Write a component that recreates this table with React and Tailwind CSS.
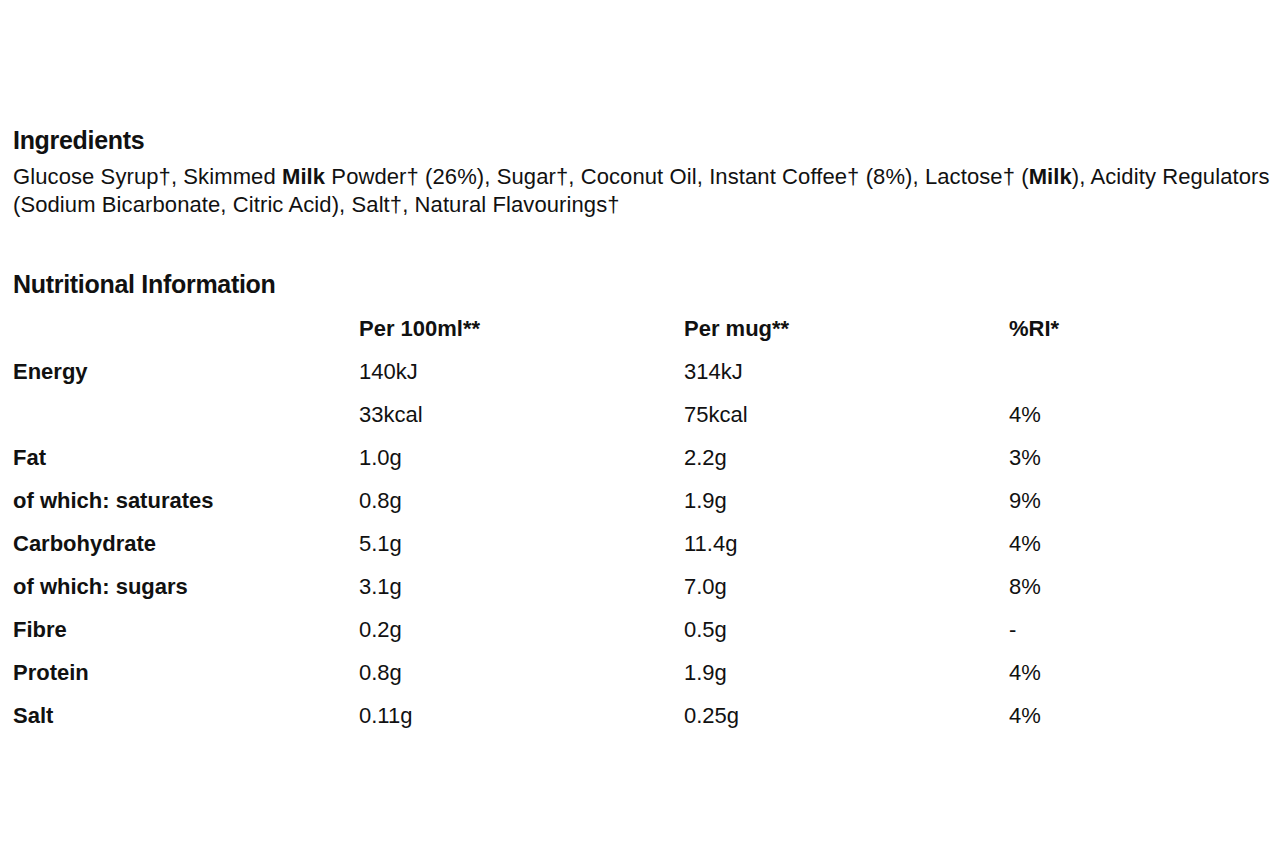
const rows = [
  { label: 'Energy', per100: '140kJ', perMug: '314kJ', ri: '' },
  { label: '', per100: '33kcal', perMug: '75kcal', ri: '4%' },
  { label: 'Fat', per100: '1.0g', perMug: '2.2g', ri: '3%' },
  { label: 'of which: saturates', per100: '0.8g', perMug: '1.9g', ri: '9%' },
  { label: 'Carbohydrate', per100: '5.1g', perMug: '11.4g', ri: '4%' },
  { label: 'of which: sugars', per100: '3.1g', perMug: '7.0g', ri: '8%' },
  { label: 'Fibre', per100: '0.2g', perMug: '0.5g', ri: '-' },
  { label: 'Protein', per100: '0.8g', perMug: '1.9g', ri: '4%' },
  { label: 'Salt', per100: '0.11g', perMug: '0.25g', ri: '4%' },
];

export default function App() {
  return (
    <div className="min-h-[853px] bg-white text-[#111] font-['Liberation_Sans',Arial,sans-serif] pl-[13px] pt-[126px]">
      <h2 className="text-[25px] font-bold leading-[28px] tracking-[-0.3px]">Ingredients</h2>
      <p className="text-[22px] leading-[28px] mt-[9px] tracking-[0.1px] whitespace-nowrap">
        Glucose Syrup†, Skimmed <b>Milk</b> Powder† (26%), Sugar†, Coconut Oil, Instant Coffee† (8%), Lactose† (<b>Milk</b>), Acidity Regulators
        <br />
        (Sodium Bicarbonate, Citric Acid), Salt†, Natural Flavourings†
      </p>

      <h2 className="text-[25px] font-bold leading-[28px] tracking-[-0.3px] mt-[51px]">Nutritional Information</h2>
      <div className="mt-[9px] text-[22px]">
        <div className="grid grid-cols-[346px_325px_325px_1fr] h-[43px] items-center font-bold">
          <div></div>
          <div>Per 100ml**</div>
          <div>Per mug**</div>
          <div>%RI*</div>
        </div>
        {rows.map((r, i) => (
          <div key={i} className="grid grid-cols-[346px_325px_325px_1fr] h-[43px] items-center">
            <div className="font-bold">{r.label}</div>
            <div>{r.per100}</div>
            <div>{r.perMug}</div>
            <div>{r.ri}</div>
          </div>
        ))}
      </div>
    </div>
  );
}
